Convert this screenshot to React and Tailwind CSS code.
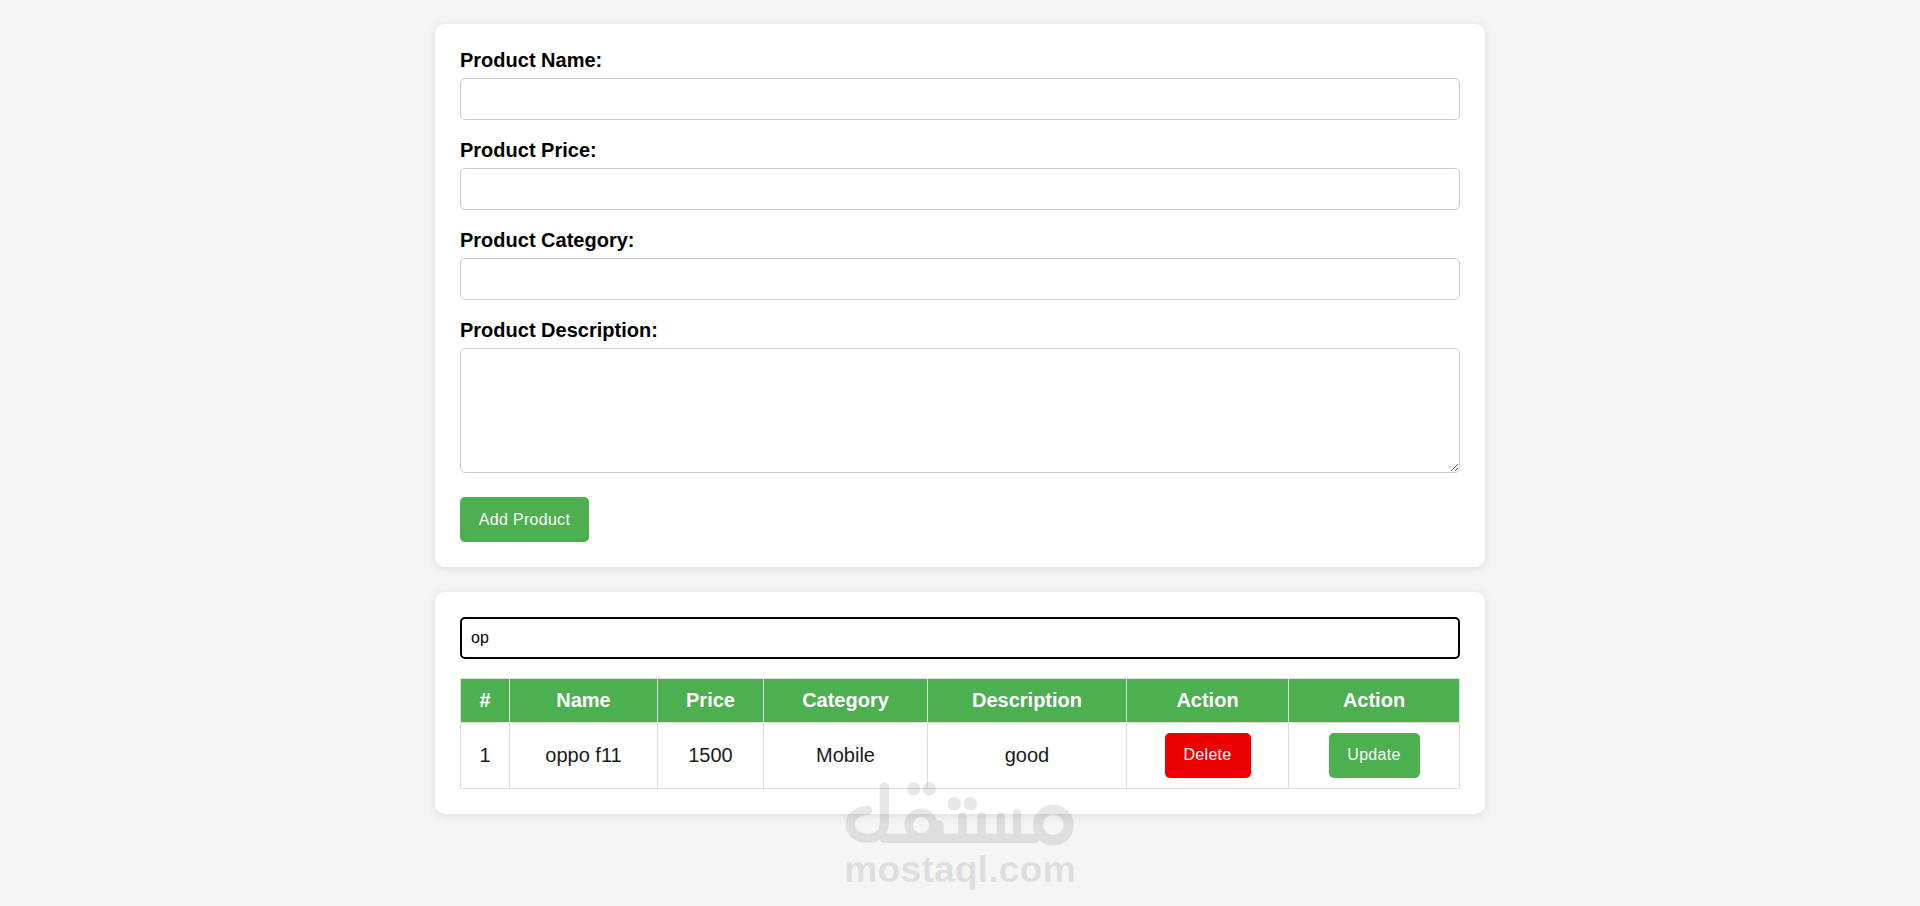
import React from "react";

function Field({ label, last, children }) {
  return (
    <div className={last ? "mb-[24px]" : "mb-[19px]"}>
      <label className="block h-[29px] text-[20px] leading-[22px] font-bold text-black">{label}</label>
      {children}
    </div>
  );
}

function TextInput() {
  return <input type="text" className="block w-full h-[42px] border border-[#cccccc] rounded-[5px] bg-white px-[10px] text-[16px] outline-none" />;
}

function Logo() {
  return (
    <svg width="250" height="76" viewBox="0 0 750 228" fill="none" className="block">
      <g opacity="0.09">
        <g stroke="#000000" strokeWidth="28" strokeLinecap="round" strokeLinejoin="round">
          <path d="M148 36V140C148 172 128 190 100 190C66 190 46 172 46 148C46 124 66 106 98 106" />
          <path d="M148 190H600" />
          <path d="M312 190V150" />
        </g>
        <g stroke="#000000" strokeWidth="25" strokeLinecap="round">
          <circle cx="258" cy="150" r="37" />
          <path d="M382 190V124" />
          <path d="M440 190V124" />
          <path d="M497 190V124" />
          <path d="M546 190V114" />
        </g>
        <circle cx="655" cy="150" r="46" stroke="#000000" strokeWidth="31" />
        <g fill="#000000">
          <circle cx="236" cy="42" r="20" />
          <circle cx="283" cy="42" r="20" />
          <circle cx="358" cy="86" r="20" />
          <circle cx="406" cy="86" r="20" />
        </g>
      </g>
    </svg>
  );
}

export default function App() {
  const th = "border border-[#dddddd] py-[10px] text-center text-[20px] leading-[23px] font-bold text-white h-[44px]";
  const td = "border border-[#dddddd] text-center text-[20px] text-[#1a1a1a]";
  const body = td + " pb-[2px]";
  const btn = "text-white text-[16px] tracking-[0.3px] rounded-[5px]";
  return (
    <div className="relative min-h-[906px] bg-[#f5f5f5] pt-[24px] font-['Liberation_Sans',Arial,sans-serif] overflow-hidden">
      <div className="w-[1050px] mx-auto">
        <div className="bg-white rounded-[10px] shadow-[0_2px_10px_rgba(0,0,0,0.1)] p-[25px] mb-[25px]">
          <Field label="Product Name:"><TextInput /></Field>
          <Field label="Product Price:"><TextInput /></Field>
          <Field label="Product Category:"><TextInput /></Field>
          <Field label="Product Description:" last>
            <textarea className="block w-full h-[125px] border border-[#cccccc] rounded-[5px] bg-white p-[10px] text-[16px] resize-y outline-none" />
          </Field>
          <button className={"block w-[129px] h-[45px] bg-[#4caf50] " + btn}>Add Product</button>
        </div>
        <div className="bg-white rounded-[10px] shadow-[0_2px_10px_rgba(0,0,0,0.1)] p-[25px]">
          <input type="text" defaultValue="op" className="block w-full h-[42px] border-2 border-black rounded-[5px] bg-white px-[9px] text-[16px] text-black outline-none mb-[19px]" />
          <table className="w-full border-collapse table-fixed">
            <colgroup>
              <col className="w-[49px]" />
              <col className="w-[148px]" />
              <col className="w-[106px]" />
              <col className="w-[164px]" />
              <col className="w-[199px]" />
              <col className="w-[162px]" />
              <col className="w-[171px]" />
            </colgroup>
            <thead>
              <tr className="bg-[#4caf50]">
                <th className={th}>#</th>
                <th className={th}>Name</th>
                <th className={th}>Price</th>
                <th className={th}>Category</th>
                <th className={th}>Description</th>
                <th className={th}>Action</th>
                <th className={th}>Action</th>
              </tr>
            </thead>
            <tbody>
              <tr className="h-[66px]">
                <td className={body}>1</td>
                <td className={body}>oppo f11</td>
                <td className={body}>1500</td>
                <td className={body}>Mobile</td>
                <td className={body}>good</td>
                <td className={td}>
                  <button className={"inline-block align-middle w-[86px] h-[45px] pb-[2px] bg-[#ee0000] " + btn}>Delete</button>
                </td>
                <td className={td}>
                  <button className={"inline-block align-middle w-[91px] h-[45px] pb-[2px] bg-[#4caf50] " + btn}>Update</button>
                </td>
              </tr>
            </tbody>
          </table>
        </div>
      </div>
      <div className="absolute left-[835px] top-[775px] w-[250px] flex flex-col items-center">
        <Logo />
        <div className="text-[37.6px] leading-[40px] font-bold text-black/10 mt-[-2px]">mostaql.com</div>
      </div>
    </div>
  );
}
